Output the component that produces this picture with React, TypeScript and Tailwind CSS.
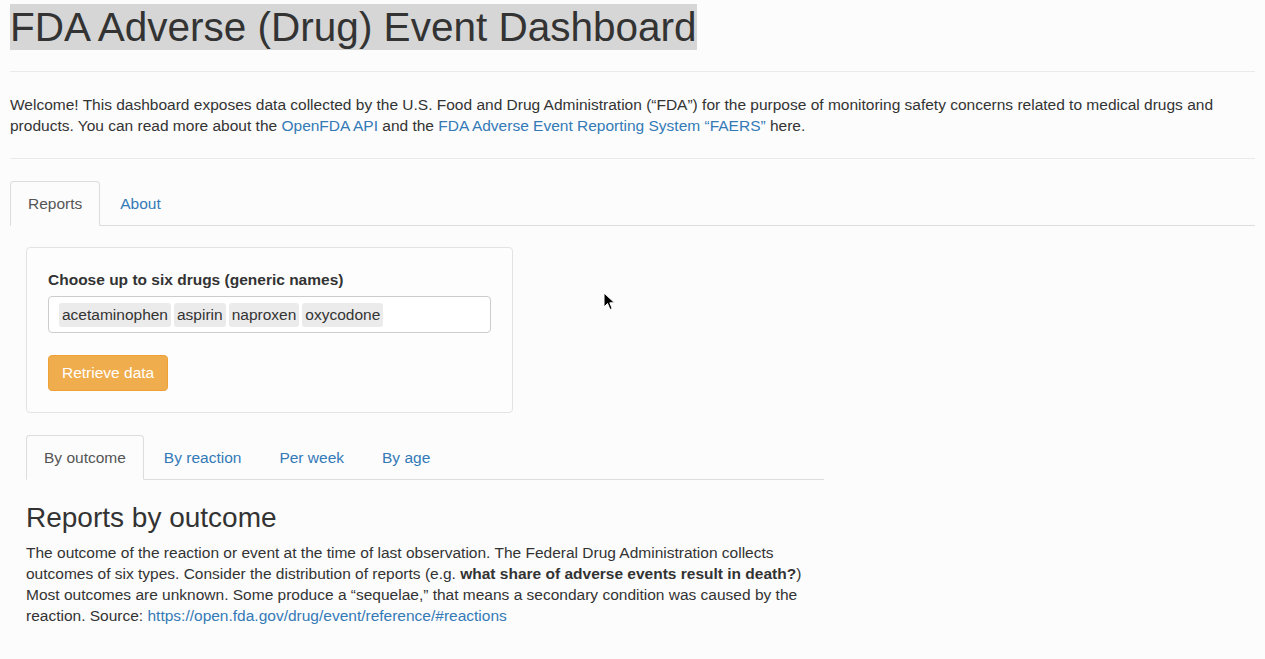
import { useState } from "react";

const drugs = ["acetaminophen", "aspirin", "naproxen", "oxycodone"];

function Cursor() {
  return (
    <svg className="absolute left-[603px] top-[292px]" width="14" height="20" viewBox="0 0 14 20">
      <path d="M1 1 L1 15 L4.5 11.5 L7 17.5 L9.2 16.6 L6.8 10.8 L11.5 10.8 Z" fill="#000" stroke="#fff" strokeWidth="1" strokeLinejoin="round" />
    </svg>
  );
}

function Tabs({ items, active, onPick }: { items: string[]; active: number; onPick: (i: number) => void }) {
  return (
    <ul className="flex border-b border-[#ddd]">
      {items.map((label, i) =>
        i === active ? (
          <li key={label} className="-mb-px mr-[2px]">
            <span className="block rounded-t-[4px] border border-[#ddd] border-b-transparent bg-[#fcfcfc] px-[17px] leading-[43px] text-[#555]">
              {label}
            </span>
          </li>
        ) : (
          <li key={label} className="-mb-px mr-[2px]">
            <button
              onClick={() => onPick(i)}
              className="block border border-transparent px-[17px] leading-[43px] text-[#337ab7]"
            >
              {label}
            </button>
          </li>
        )
      )}
    </ul>
  );
}

export default function App() {
  const [mainTab, setMainTab] = useState(0);
  const [subTab, setSubTab] = useState(0);

  return (
    <div className="relative min-h-[659px] bg-[#fcfcfc] px-[10px] pt-[5px] font-['Liberation_Sans',Arial,sans-serif] text-[15.5px] text-[#333]">
      <h1 className="text-[40.5px] leading-[45px]">
        <span className="bg-[#d6d6d6]">FDA Adverse (Drug) Event Dashboard</span>
      </h1>
      <hr className="mt-[21px] border-[#eaeaea]" />
      <p className="mt-[22px] pr-[8px] leading-[21px]">
        Welcome! This dashboard exposes data collected by the U.S. Food and Drug Administration (“FDA”) for the purpose of monitoring safety concerns related to medical drugs and
        products. You can read more about the <a className="text-[#337ab7]">OpenFDA API</a> and the{" "}
        <a className="text-[#337ab7]">FDA Adverse Event Reporting System “FAERS”</a> here.
      </p>
      <hr className="mt-[22px] border-[#eaeaea]" />

      <div className="mt-[22px]">
        <Tabs items={["Reports", "About"]} active={mainTab} onPick={setMainTab} />
      </div>

      <div className="pl-[16px]">
        <div className="mt-[21px] w-[487px] rounded-[4px] border border-[#e3e3e3] bg-[#fdfdfd] px-[21px] pb-[21px] pt-[22px]">
          <label className="block font-bold leading-[20px]">Choose up to six drugs (generic names)</label>
          <div className="mt-[6px] flex h-[37px] items-center gap-[3px] rounded-[4px] border border-[#ccc] bg-white px-[10px]">
            {drugs.map((d) => (
              <span key={d} className="rounded-[3px] bg-[#ebebeb] px-[3px] leading-[24px]">
                {d}
              </span>
            ))}
          </div>
          <button className="mt-[22px] h-[36px] rounded-[4px] border border-[#eea236] bg-[#f0ad4e] px-[13px] text-white">
            Retrieve data
          </button>
        </div>

        <div className="mt-[22px] w-[798px]">
          <Tabs items={["By outcome", "By reaction", "Per week", "By age"]} active={subTab} onPick={setSubTab} />
          <h2 className="mt-[23px] text-[28px] leading-[30px]">Reports by outcome</h2>
          <p className="mt-[9px] leading-[21px]">
            The outcome of the reaction or event at the time of last observation. The Federal Drug Administration collects outcomes of six types. Consider the distribution of
            reports (e.g. <b>what share of adverse events result in death?</b>) Most outcomes are unknown. Some produce a “sequelae,” that means a secondary condition was caused
            by the reaction. Source: <a className="text-[#337ab7]">https://open.fda.gov/drug/event/reference/#reactions</a>
          </p>
        </div>
      </div>
      <Cursor />
    </div>
  );
}
